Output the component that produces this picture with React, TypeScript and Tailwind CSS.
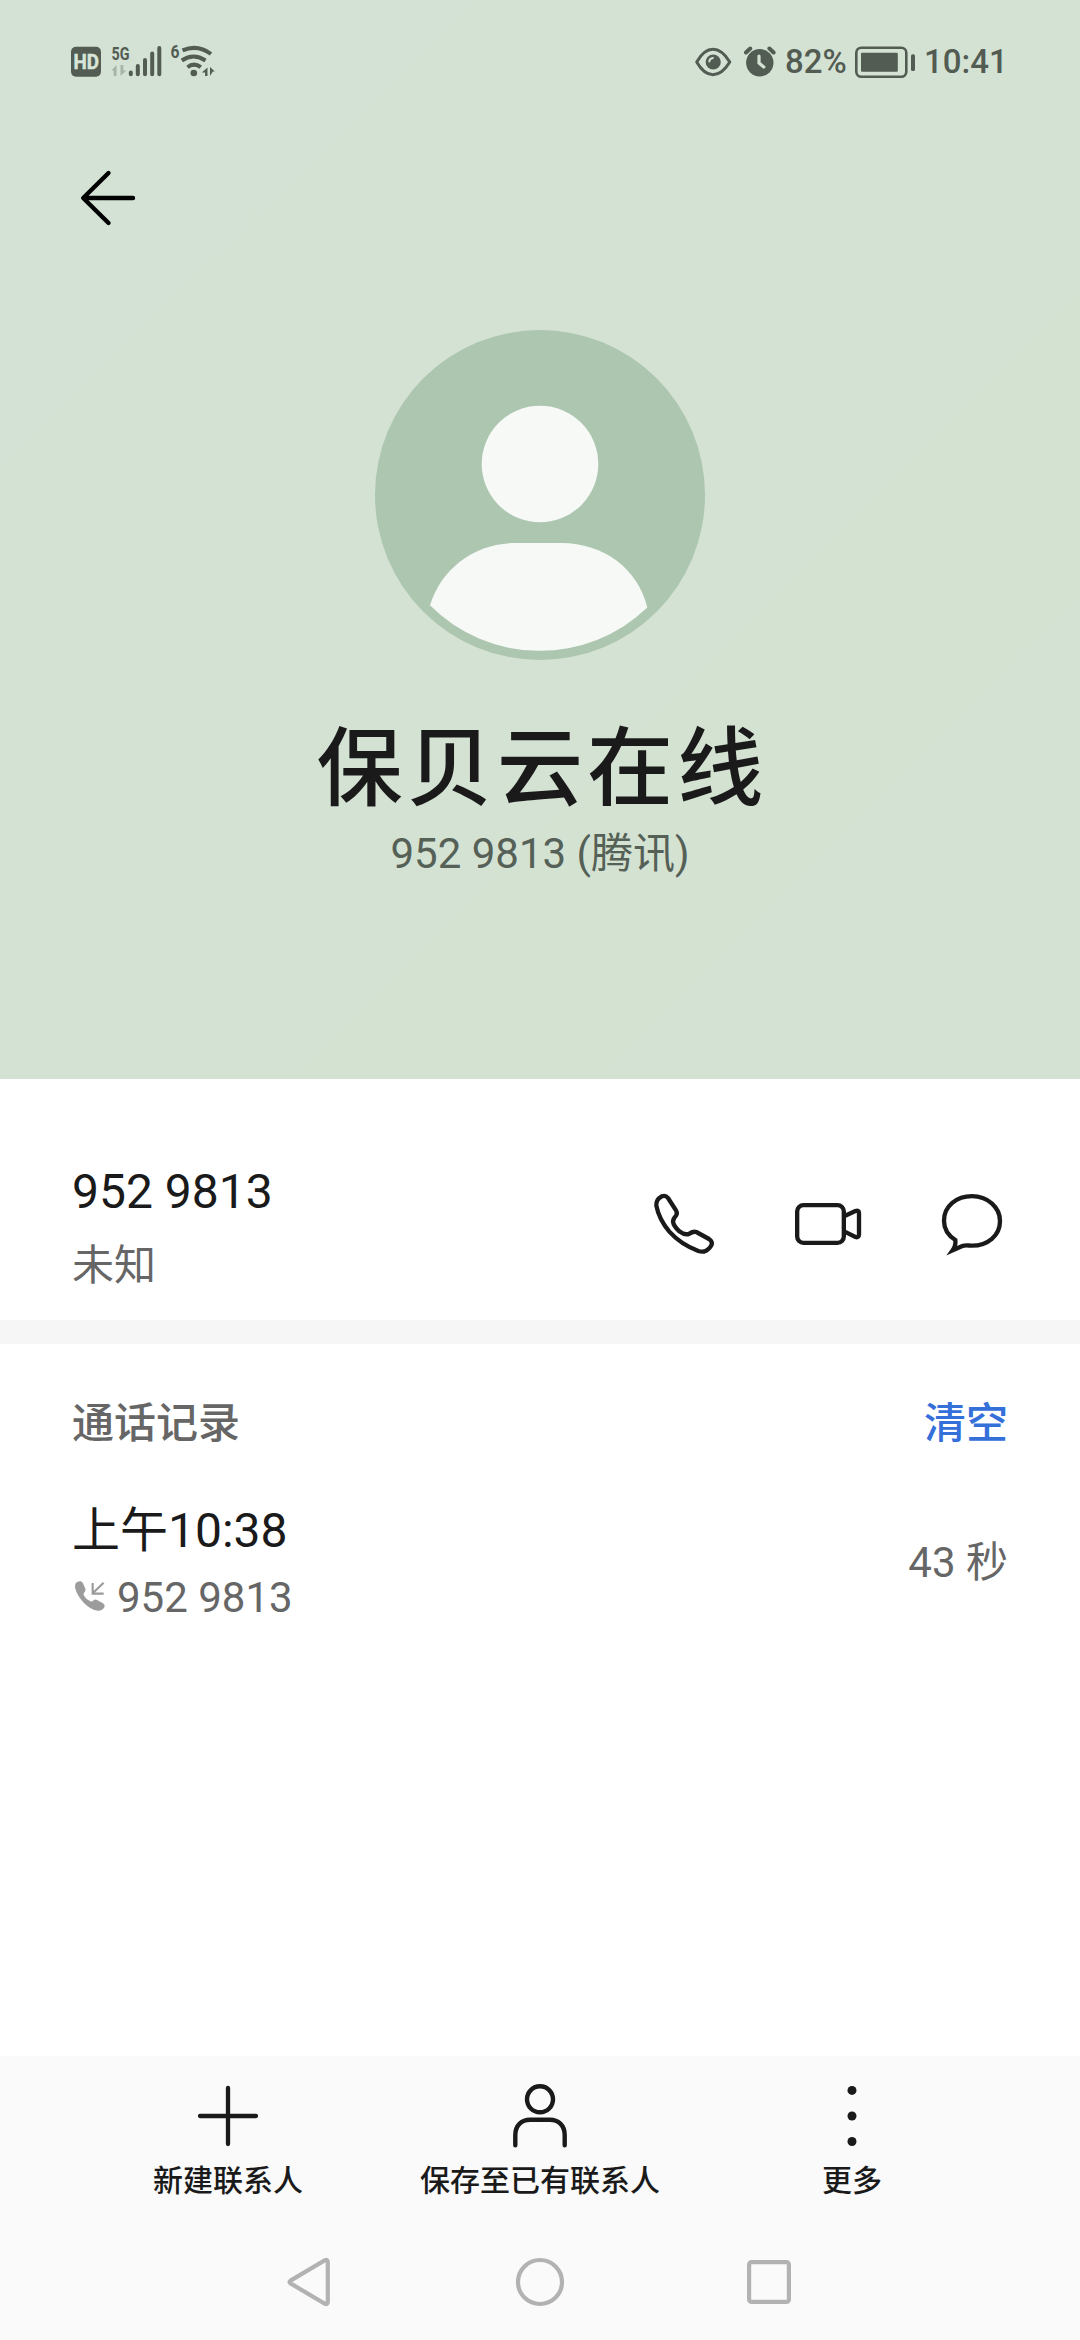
import type { ReactNode } from "react"

interface CallRecord {
  id: string
  time: string
  number: string
  duration: string
}

interface ToolbarAction {
  id: string
  label: string
  icon: ReactNode
}

const contact = {
  name: "保贝云在线",
  number: "952 9813",
  source: "腾讯",
  location: "未知",
}

const callRecords: CallRecord[] = [{ id: "1", time: "上午10:38", number: "952 9813", duration: "43 秒" }]

const SignalIcons = () => (
  <svg className="w-[150px] h-[40px] text-[#525c52]" viewBox="68 42 150 40" fill="currentColor">
    <rect x="71" y="46.8" width="30" height="30" rx="5" />
    <text
      x="73.5"
      y="69.2"
      fontSize="20"
      fontWeight="700"
      textLength="25.5"
      lengthAdjust="spacingAndGlyphs"
      fill="#d9e5d9"
      stroke="#d9e5d9"
      strokeWidth="0.5"
    >
      HD
    </text>
    <text x="111.5" y="59.5" fontSize="18.5" fontWeight="700" textLength="18" lengthAdjust="spacingAndGlyphs">
      5G
    </text>
    <g opacity="0.35">
      <path d="M116.5 65v11h-2.8v-5.5h-2.2zM120.5 76v-11h2.8v5.5h3z" />
    </g>
    <g stroke="currentColor" strokeWidth="4" strokeLinecap="round">
      <path d="M130.8 72.5v1.8M137.8 66v8.3M145 60v14.3M152.2 53.5v20.8M159.3 48v26.3" />
    </g>
    <text x="170.5" y="58" fontSize="18" fontWeight="700" textLength="9" lengthAdjust="spacingAndGlyphs">
      6
    </text>
    <g fill="none" stroke="currentColor" strokeWidth="4">
      <path d="M182.5 50.3Q198 44 211 54" />
      <path d="M181.8 60.5Q193.5 52.5 205.5 60.5" />
      <path d="M187.5 67.2Q194 62 200.8 67.2" />
    </g>
    <circle cx="193.8" cy="73" r="3.3" />
    <path d="M207.5 67.5v8.5h-2.4v-3.6h-3.3zM210 76v-9l4.8 4.6h-2z" />
  </svg>
)

const EyeIcon = () => (
  <svg className="w-[38px] h-[30px]" viewBox="694 46 38 30" fill="none" stroke="#525c52" strokeWidth="3">
    <path d="M696.7 61Q704 48.3 713 48.3T729.8 61Q722 73.7 713 73.7T696.7 61Z" strokeLinejoin="round" />
    <circle cx="713.2" cy="61" r="7.6" fill="#525c52" stroke="none" />
    <path d="M709.3 60.5a4 4 0 0 1 3.6-3.6" stroke="#d4e2d4" strokeWidth="2" strokeLinecap="round" />
  </svg>
)

const AlarmIcon = () => (
  <svg className="w-[34px] h-[34px]" viewBox="743 45 34 34" fill="none" strokeLinecap="round" strokeLinejoin="round">
    <circle cx="759.8" cy="62.7" r="13.7" fill="#525c52" />
    <path d="M746 52.5l4.2-4M773.6 52.5l-4.2-4" stroke="#525c52" strokeWidth="4" />
    <path d="M759 56v7l4.8 4" stroke="#d4e2d4" strokeWidth="3.2" />
  </svg>
)

const BatteryIcon = () => (
  <svg className="w-[62px] h-[34px]" viewBox="854 44 62 34">
    <rect x="856.3" y="46.8" width="50" height="29" rx="5" fill="none" stroke="#525c52" strokeWidth="2.6" />
    <rect x="861" y="51.7" width="36.8" height="19" rx="1" fill="#525c52" />
    <rect x="911" y="53.3" width="4" height="16.7" rx="1.6" fill="#525c52" />
  </svg>
)

const StatusBar = () => (
  <div className="flex h-[124px] items-center justify-between pl-[68px] pr-[73px] text-[33px] font-medium text-[#525c52]">
    <SignalIcons />
    <div className="flex items-center">
      <EyeIcon />
      <div className="w-[11px]" />
      <AlarmIcon />
      <span className="ml-[8px] w-[69px] leading-[40px]">82%</span>
      <BatteryIcon />
      <span className="ml-[8px] w-[83px] leading-[40px]">10:41</span>
    </div>
  </div>
)

const BackArrow = () => (
  <svg className="h-[72px] w-[72px]" viewBox="72 162 72 72" fill="none" stroke="#000" strokeWidth="4.4">
    <path d="M108.5 173L83.2 198l25.3 25M84 198h49" strokeLinecap="round" strokeLinejoin="round" />
  </svg>
)

const Avatar = () => (
  <svg className="h-[330px] w-[330px]" viewBox="0 0 330 330">
    <circle cx="165" cy="165" r="165" fill="#adc6b0" />
    <circle cx="165" cy="134" r="58.3" fill="#f7f9f7" />
    <path
      d="M55 275.3C66 238.5 100 213 140 213H186C229 213 263 239 272.3 277.5A155 155 0 0 1 55 275.3Z"
      fill="#f7f9f7"
    />
  </svg>
)

const PhoneIcon = () => (
  <svg className="h-[72px] w-[72px]" viewBox="0 0 216 216" fill="none" stroke="#1a1a1a" strokeWidth="13">
    <path
      d="M60 30L84 67Q89 75 84 83Q75 93 75 101Q77 115 94 130Q111 143 124 137Q136 129 145 132L183 153Q194 160 191 170Q184 185 169 190.5Q160 192 151 189Q98 169 64 131Q33 94 25 53Q23 35 41 25Q53 21 60 30Z"
      strokeLinejoin="round"
    />
  </svg>
)

const VideoIcon = () => (
  <svg className="h-[72px] w-[72px]" viewBox="0 0 216 216" fill="none" stroke="#1a1a1a" strokeWidth="13">
    <rect x="15.5" y="51.5" width="140" height="113" rx="19" />
    <path d="M158 84L190 69Q201 65 201 75V139Q201 150 190 147L158 131" />
  </svg>
)

const MessageIcon = () => (
  <svg className="h-[72px] w-[72px]" viewBox="0 0 216 216" fill="none" stroke="#1a1a1a" strokeWidth="13">
    <path d="M58 156Q24 134 24 98C24 54 62 24.5 108 24.5C154 24.5 192 57 192 99C192 143 155 173 108 173C98 173 90 170 79 174L50 187Q60 173 58 156Z" />
  </svg>
)

const IncomingIcon = () => (
  <svg className="h-[30px] w-[30px]" viewBox="0 0 90 90" fill="#9c9c9c">
    <path d="M3 5Q10 -1 18 1Q23 3 26 11L31 23Q33 28 29 33Q24 38 27 44Q34 56 46 61Q52 63 56 58Q60 54 66 57L84 67Q91 72 88 79Q82 90 68 89Q48 87 26 65Q4 41 0 19Q0 9 3 5Z" />
    <path d="M86 5L53 37M53 6V38H86" fill="none" stroke="#9c9c9c" strokeWidth="6.5" />
  </svg>
)

const PlusIcon = () => (
  <svg className="h-[72px] w-[72px]" viewBox="0 0 72 72" stroke="#1a1a1a" strokeWidth="4.3" strokeLinecap="round">
    <path d="M36 8v56M8 36h56" />
  </svg>
)

const PersonIcon = () => (
  <svg className="h-[72px] w-[72px]" viewBox="0 0 72 72" fill="none" stroke="#1a1a1a" strokeWidth="4.4">
    <circle cx="36" cy="19.3" r="13" />
    <path d="M11.3 65.3V55C11.3 45 18 39.7 26 39.7H46C54 39.7 60.7 45 60.7 55V65.3" strokeLinecap="round" />
  </svg>
)

const MoreIcon = () => (
  <svg className="h-[72px] w-[72px]" viewBox="0 0 72 72" fill="#1a1a1a">
    <circle cx="36" cy="10.4" r="4.5" />
    <circle cx="36" cy="36" r="4.5" />
    <circle cx="36" cy="61.5" r="4.5" />
  </svg>
)

const toolbarActions: ToolbarAction[] = [
  { id: "new", label: "新建联系人", icon: <PlusIcon /> },
  { id: "save", label: "保存至已有联系人", icon: <PersonIcon /> },
  { id: "more", label: "更多", icon: <MoreIcon /> },
]

const NavigationBar = () => (
  <div className="mt-[50px] flex justify-center gap-[169px]">
    <svg className="h-[60px] w-[60px]" viewBox="0 0 60 60" fill="none" stroke="#b2b2b2" strokeWidth="4.2">
      <path d="M9.5 28.6L44 8.2Q46.8 7.2 46.8 10V50Q46.8 52.8 44 51.8L9.5 31.4Q7.5 30 9.5 28.6Z" />
    </svg>
    <svg className="h-[60px] w-[60px]" viewBox="0 0 60 60" fill="none" stroke="#b2b2b2" strokeWidth="4.2">
      <circle cx="30" cy="30" r="22" />
    </svg>
    <svg className="h-[60px] w-[60px]" viewBox="0 0 60 60" fill="none" stroke="#b2b2b2" strokeWidth="4.2">
      <rect x="10.1" y="10.1" width="39.8" height="39.8" rx="2.5" />
    </svg>
  </div>
)

export default function App() {
  return (
    <div className="flex h-[2340px] w-[1080px] flex-col overflow-hidden bg-white font-['Roboto','Noto_Sans_CJK_SC',sans-serif] text-[#1a1a1a]">
      {/* Contact header */}
      <header className="h-[1079px] shrink-0 bg-[linear-gradient(135deg,#d4e2d5_0%,#d4e2d4_45%,#d4e2d2_70%,#d4e2d4_100%)]">
        <StatusBar />
        <div className="flex h-[148px] items-center pl-[72px]">
          <BackArrow />
        </div>
        <div className="flex flex-col items-center pt-[58px]">
          <Avatar />
          <h1 className="mt-[58px] pl-[4px] text-[86px] leading-[104px] font-medium tracking-[4.2px]">
            {contact.name}
          </h1>
          <p className="mt-[6px] text-[42px] leading-[52px] text-[#556056]">
            {contact.number} ({contact.source})
          </p>
        </div>
      </header>

      {/* Number and quick actions */}
      <section className="flex h-[241px] shrink-0 items-start justify-between px-[72px] pt-[83px]">
        <div>
          <p className="text-[48px] leading-[60px]">{contact.number}</p>
          <p className="mt-[18px] text-[42px] leading-[52px] text-[#666]">{contact.location}</p>
        </div>
        <div className="mt-[26px] flex gap-[72px]">
          <PhoneIcon />
          <VideoIcon />
          <MessageIcon />
        </div>
      </section>

      <div className="h-[24px] shrink-0 bg-[#f6f6f6]" />

      {/* Call log */}
      <section className="flex-1 px-[72px] pt-[54px]">
        <div className="flex justify-between text-[42px] leading-[52px] font-medium">
          <h2 className="text-[#666]">通话记录</h2>
          <button className="text-[#3570da]">清空</button>
        </div>
        {callRecords.map((record) => (
          <div key={record.id} className="flex items-center justify-between pt-[51px]">
            <div>
              <p className="text-[48px] leading-[60px]">{record.time}</p>
              <div className="mt-[11px] flex items-center text-[42px] leading-[52px] text-[#666]">
                <div className="mr-[12px] mb-[4px] ml-[3px]">
                  <IncomingIcon />
                </div>
                {record.number}
              </div>
            </div>
            <p className="text-[42px] leading-[52px] text-[#666]">{record.duration}</p>
          </div>
        ))}
      </section>

      {/* Bottom toolbar */}
      <footer className="h-[284px] shrink-0 bg-[#fafafa] pt-[24px]">
        <div className="flex px-[72px]">
          {toolbarActions.map((action) => (
            <div key={action.id} className="flex flex-1 flex-col items-center">
              {action.icon}
              <span className="mt-[8px] text-[30px] leading-[42px] font-medium">{action.label}</span>
            </div>
          ))}
        </div>
        <NavigationBar />
      </footer>
    </div>
  )
}
